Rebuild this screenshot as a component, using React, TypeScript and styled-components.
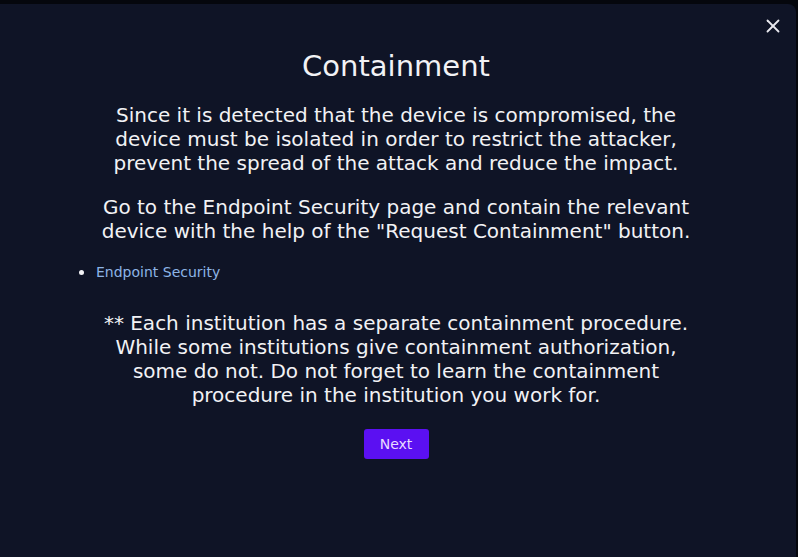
import React from "react";
import styled, { createGlobalStyle } from "styled-components";
import { X } from "lucide-react";

const GlobalStyle = createGlobalStyle`
  html, body {
    margin: 0;
    padding: 0;
    background: #05070d;
    overflow: hidden;
  }
  body {
    font-family: "DejaVu Sans", "Noto Sans", sans-serif;
  }
`;

const Page = styled.div`
  width: 798px;
  height: 557px;
  padding-top: 4px;
  box-sizing: border-box;
  display: flex;
`;

const Modal = styled.div`
  position: relative;
  width: 796px;
  height: 553px;
  background: #0f1426;
  border-radius: 0 8px 0 0;
  color: #f2f2f5;
  display: flex;
  flex-direction: column;
  align-items: center;
  padding: 44px 60px 0 56px;
  box-sizing: border-box;
`;

const CloseButton = styled.button`
  position: absolute;
  top: 11px;
  right: 12px;
  width: 22px;
  height: 22px;
  padding: 0;
  border: none;
  background: transparent;
  color: #e8e8ee;
  display: flex;
  align-items: center;
  justify-content: center;
  cursor: pointer;
`;

const Title = styled.h2`
  margin: 0 0 19px;
  font-size: 29px;
  font-weight: 500;
  line-height: 36px;
  text-align: center;
`;

const Text = styled.p<{ $gap?: number }>`
  margin: 0 0 ${({ $gap }) => $gap ?? 0}px;
  font-size: 20px;
  line-height: 24px;
  text-align: center;
  width: 100%;
`;

const LinkList = styled.ul`
  align-self: stretch;
  list-style: none;
  margin: 0 0 29px;
  padding-left: 23px;
  font-size: 14px;
  line-height: 20px;
`;

const LinkItem = styled.li`
  display: flex;
  align-items: center;
  gap: 12px;
`;

const Dot = styled.span`
  width: 5px;
  height: 5px;
  border-radius: 50%;
  background: #f2f2f5;
  flex-shrink: 0;
`;

const Anchor = styled.a`
  color: #8db4e6;
  text-decoration: none;
`;

const NextButton = styled.button`
  width: 65px;
  height: 30px;
  margin-top: 22px;
  border: none;
  border-radius: 3px;
  background: #5b10f2;
  color: #e8dcff;
  font-family: inherit;
  font-size: 14px;
  cursor: pointer;
`;

export default function App() {
  return (
    <>
      <GlobalStyle />
      <Page>
        <Modal>
          <CloseButton aria-label="Close">
            <X size={22} strokeWidth={2} />
          </CloseButton>
          <Title>Containment</Title>
          <Text $gap={20}>
            Since it is detected that the device is compromised, the
            <br />
            device must be isolated in order to restrict the attacker,
            <br />
            prevent the spread of the attack and reduce the impact.
          </Text>
          <Text $gap={19}>
            Go to the Endpoint Security page and contain the relevant
            <br />
            device with the help of the "Request Containment" button.
          </Text>
          <LinkList>
            <LinkItem>
              <Dot />
              <Anchor href="#">Endpoint Security</Anchor>
            </LinkItem>
          </LinkList>
          <Text>
            ** Each institution has a separate containment procedure.
            <br />
            While some institutions give containment authorization,
            <br />
            some do not. Do not forget to learn the containment
            <br />
            procedure in the institution you work for.
          </Text>
          <NextButton>Next</NextButton>
        </Modal>
      </Page>
    </>
  );
}
